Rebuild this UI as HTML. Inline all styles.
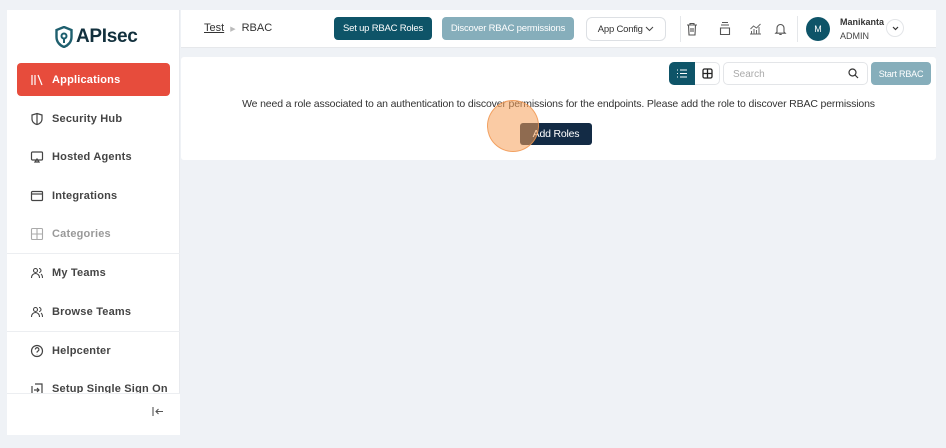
<!DOCTYPE html>
<html><head><meta charset="utf-8"><style>
*{box-sizing:border-box;margin:0;padding:0}
body{width:946px;height:448px;background:#eff2f6;font-family:"Liberation Sans",sans-serif;position:relative;overflow:hidden;color:#333}
.abs{position:absolute}
#side{left:7px;top:10px;width:173px;height:425px;background:#fff;border-right:1px solid #e8eaee}
.item{position:absolute;left:17px;width:153px;height:33px;display:flex;align-items:center;padding-left:13px;font-size:11px;font-weight:bold;color:#444;letter-spacing:.2px}
.item svg{width:14px;height:14px;margin-right:8px;flex:none}
.sep{position:absolute;left:7px;width:173px;height:1px;background:#eceef1}
#hdr{left:181px;top:10px;width:755px;height:38px;background:#fff;border-bottom:1px solid #e6e8eb}
#card{left:181px;top:57px;width:755px;height:103px;background:#fff;border-radius:3px}
.btn{position:absolute;border-radius:4px;font-size:9.5px;display:flex;align-items:center;justify-content:center;letter-spacing:-.2px}
</style></head><body>
<div id="side" class="abs"></div>
<div class="abs" style="left:55px;top:26px;display:flex;align-items:center">
<svg width="18" height="22" viewBox="0 0 18 22"><path d="M9 1 L16.5 4 V11 C16.5 16 13 19.5 9 21 C5 19.5 1.5 16 1.5 11 V4Z" fill="none" stroke="#1e5f6e" stroke-width="2.4"/><circle cx="9" cy="10" r="2.5" fill="none" stroke="#1e5f6e" stroke-width="2"/><path d="M9 12.5V17" stroke="#1e5f6e" stroke-width="2"/></svg>
<span style="font-size:19px;font-weight:bold;color:#12303d;margin-left:3px;letter-spacing:-.3px">APIsec</span></div>
<div class="item" style="top:63px;background:#e74c3c;color:#fff;border-radius:4px"><svg viewBox="0 0 14 14" fill="none" stroke="#fff" stroke-width="1.2"><path d="M2 2v10M5 2v10M8 2l4 10"/></svg>Applications</div>
<div class="item" style="top:102px"><svg viewBox="0 0 14 14" fill="none" stroke="#444" stroke-width="1.2"><path d="M7 1.5L12 3v4c0 3-2.5 5-5 5.5C4.5 12 2 10 2 7V3Z M7 1.5v11"/></svg>Security Hub</div>
<div class="item" style="top:140px"><svg viewBox="0 0 14 14" fill="none" stroke="#444" stroke-width="1.2"><rect x="1.5" y="2" width="11" height="8" rx="1"/><path d="M5 12l2-3 2 3z"/></svg>Hosted Agents</div>
<div class="item" style="top:179px"><svg viewBox="0 0 14 14" fill="none" stroke="#444" stroke-width="1.2"><rect x="1.5" y="2.5" width="11" height="9" rx="1"/><path d="M1.5 5h11"/></svg>Integrations</div>
<div class="item" style="top:217px;color:#999"><svg viewBox="0 0 14 14" fill="none" stroke="#aaa" stroke-width="1.1"><rect x="1.5" y="1.5" width="11" height="11" rx="1"/><path d="M7 1.5v11M1.5 7h11"/></svg>Categories</div>
<div class="sep" style="top:253px"></div>
<div class="item" style="top:256px"><svg viewBox="0 0 14 14" fill="none" stroke="#444" stroke-width="1.1"><circle cx="5.5" cy="4.5" r="2"/><path d="M1.5 12c0-3 2-4.5 4-4.5s4 1.5 4 4.5M9 2.5a2 2 0 010 4M11 8c1 .8 1.5 2 1.5 4"/></svg>My Teams</div>
<div class="item" style="top:295px"><svg viewBox="0 0 14 14" fill="none" stroke="#444" stroke-width="1.1"><circle cx="5.5" cy="4.5" r="2"/><path d="M1.5 12c0-3 2-4.5 4-4.5s4 1.5 4 4.5M9 2.5a2 2 0 010 4M11 8c1 .8 1.5 2 1.5 4"/></svg>Browse Teams</div>
<div class="sep" style="top:331px"></div>
<div class="item" style="top:334px"><svg viewBox="0 0 14 14" fill="none" stroke="#444" stroke-width="1.2"><circle cx="7" cy="7" r="5.5"/><path d="M5.3 5.5a1.8 1.8 0 113 1.3c-.8.5-1.3.9-1.3 1.8M7 10v.3"/></svg>Helpcenter</div>
<div class="item" style="top:372px"><svg viewBox="0 0 14 14" fill="none" stroke="#444" stroke-width="1.2"><path d="M2 4V12.5h10V2H5M4 8h5M7 6l2 2-2 2"/></svg>Setup Single Sign On</div>
<div class="abs" style="left:7px;top:393px;width:173px;height:42px;background:#fff;border-top:1px solid #eceef1"></div>
<svg class="abs" style="left:152px;top:406px" width="12" height="11" viewBox="0 0 12 11" fill="none" stroke="#555" stroke-width="1.1"><path d="M1 1v9M11 5.5H4M6.5 3L4 5.5 6.5 8"/></svg>

<div id="hdr" class="abs"></div>
<div class="abs" style="left:204px;top:22px;font-size:11px;color:#333"><span style="text-decoration:underline">Test</span><span style="color:#bbb;font-size:7px;margin:0 6px">▶</span>RBAC</div>
<div class="btn" style="left:334px;top:17px;width:98px;height:23px;background:#0e5468;color:#fff">Set up RBAC Roles</div>
<div class="btn" style="left:442px;top:17px;width:132px;height:23px;background:#86aebb;color:#fff">Discover RBAC permissions</div>
<div class="btn" style="left:586px;top:17px;width:80px;height:24px;border:1px solid #dde0e4;background:#fff;color:#333;border-radius:6px">App Config&nbsp;<svg width="9" height="6" viewBox="0 0 9 6" fill="none" stroke="#444"><path d="M1 1l3.5 3.5L8 1"/></svg></div>
<div class="abs" style="left:680px;top:16px;width:1px;height:26px;background:#e5e7ea"></div>
<div class="abs" style="left:797px;top:16px;width:1px;height:26px;background:#e5e7ea"></div>
<svg class="abs" style="left:686px;top:22px" width="12" height="14" viewBox="0 0 12 14" fill="none" stroke="#555" stroke-width="1.1"><path d="M1 3h10M4 3V1.5h4V3M2.5 3l.5 10h6l.5-10M5 6v4M7 6v4"/></svg>
<svg class="abs" style="left:719px;top:21px" width="12" height="15" viewBox="0 0 12 15" fill="none" stroke="#555" stroke-width="1.1"><path d="M3 1.5h6M2 4h8M1.5 7h9v6.5h-9z"/></svg>
<svg class="abs" style="left:749px;top:22px" width="13" height="13" viewBox="0 0 13 13" fill="none" stroke="#666" stroke-width="1"><path d="M1 12h11M2.5 12V9M5 12V7M7.5 12V8M10 12V5M1.5 7l3-3 3 2 4-4"/></svg>
<svg class="abs" style="left:774px;top:22px" width="13" height="14" viewBox="0 0 13 14" fill="none" stroke="#555" stroke-width="1.1"><path d="M3 10V6a3.5 3.5 0 017 0v4l1.2 1.2H1.8zM5.3 12.5h2.4"/></svg>
<div class="abs" style="left:806px;top:17px;width:24px;height:24px;border-radius:50%;background:#0e5468;color:#fff;font-size:9px;display:flex;align-items:center;justify-content:center">M</div>
<div class="abs" style="left:840px;top:17px;font-size:9px;font-weight:bold;color:#333">Manikanta</div>
<div class="abs" style="left:840px;top:31px;font-size:9px;color:#444">ADMIN</div>
<div class="abs" style="left:886px;top:19px;width:18px;height:18px;border-radius:50%;border:1px solid #e3e5e8;display:flex;align-items:center;justify-content:center"><svg width="7" height="5" viewBox="0 0 7 5" fill="none" stroke="#333" stroke-width="1.2"><path d="M1 1l2.5 2.5L6 1"/></svg></div>

<div id="card" class="abs"></div>
<div class="abs" style="left:669px;top:62px;width:51px;height:23px;border:1px solid #e3e5e8;border-radius:5px;background:#fff"></div>
<div class="abs" style="left:669px;top:62px;width:26px;height:23px;background:#0e5468;border-radius:5px 0 0 5px"></div>
<svg class="abs" style="left:676px;top:68px" width="12" height="11" viewBox="0 0 12 11" fill="none" stroke="#fff" stroke-width="1.1"><path d="M1 2h1M4 2h7M1 5.5h1M4 5.5h7M1 9h1M4 9h7"/></svg>
<svg class="abs" style="left:702px;top:68px" width="11" height="11" viewBox="0 0 11 11" fill="none" stroke="#222" stroke-width="1.3"><rect x="1" y="1" width="9" height="9" rx="1.5"/><path d="M5.5 1v9M1 5.5h9"/></svg>
<div class="abs" style="left:723px;top:62px;width:145px;height:23px;border:1px solid #e3e5e8;border-radius:5px;background:#fff;font-size:10px;color:#aaa;padding:6px 0 0 9px">Search</div>
<svg class="abs" style="left:848px;top:68px" width="11" height="11" viewBox="0 0 11 11" fill="none" stroke="#333" stroke-width="1.2"><circle cx="4.5" cy="4.5" r="3.5"/><path d="M7 7l3 3"/></svg>
<div class="btn" style="left:871px;top:62px;width:60px;height:23px;background:#86aebb;color:#fff;font-size:9px">Start RBAC</div>
<div class="abs" style="left:181px;top:98px;width:755px;text-align:center;font-size:10.5px;letter-spacing:-.15px;color:#333">We need a role associated to an authentication to discover permissions for the endpoints. Please add the role to discover RBAC permissions</div>
<div class="btn" style="left:520px;top:123px;width:72px;height:22px;background:#132b45;color:#fff;font-size:10.5px;border-radius:3px">Add Roles</div>
<div class="abs" style="left:487px;top:100px;width:52px;height:52px;border-radius:50%;background:rgba(245,160,90,.55);border:1.5px solid rgba(240,150,80,.8)"></div>
</body></html>
